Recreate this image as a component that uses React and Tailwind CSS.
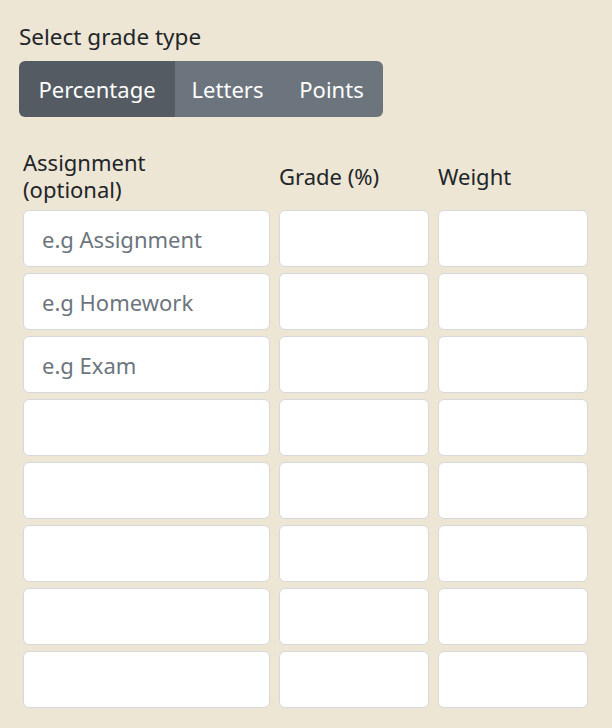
import React from 'react';

const rows = ['e.g Assignment', 'e.g Homework', 'e.g Exam', '', '', '', '', ''];

const App = () => {
    return (
        <div className="min-h-screen w-[612px] h-[728px] bg-[#eee6d5] text-[#212529] font-['Noto_Sans',sans-serif] px-[19px] pt-[22px]">
            <p className="text-[22.5px] leading-[30px]">Select grade type</p>
            {/* Grade type toggle */}
            <div className="mt-[9px] flex w-[364px] h-[56px] rounded-[6px] overflow-hidden text-white text-[22px]">
                <button className="w-[156px] bg-[#545b62] flex items-center justify-center">Percentage</button>
                <button className="w-[105px] bg-[#6c757d] flex items-center justify-center">Letters</button>
                <button className="flex-1 bg-[#6c757d] flex items-center justify-center">Points</button>
            </div>

            <div className="ml-[4px] mt-[31px] w-[565px]">
                {/* Header */}
                <div className="grid grid-cols-[247px_150px_150px] gap-x-[9px] items-center text-[22px] leading-[27px] h-[56px]">
                    <div>Assignment<br />(optional)</div>
                    <div>Grade (%)</div>
                    <div>Weight</div>
                </div>
                {/* Inputs */}
                <div className="mt-[6px] flex flex-col gap-[6px]">
                    {rows.map((ph, i) => (
                        <div key={i} className="grid grid-cols-[247px_150px_150px] gap-x-[9px]">
                            <input placeholder={ph} className="h-[57px] bg-white border border-[#d6d8dc] rounded-[6px] px-[18px] text-[22px] placeholder:text-[#6c757d] outline-none" />
                            <input className="h-[57px] bg-white border border-[#d6d8dc] rounded-[6px] outline-none" />
                            <input className="h-[57px] bg-white border border-[#d6d8dc] rounded-[6px] outline-none" />
                        </div>
                    ))}
                </div>
            </div>
        </div>
    );
};

export default App;
